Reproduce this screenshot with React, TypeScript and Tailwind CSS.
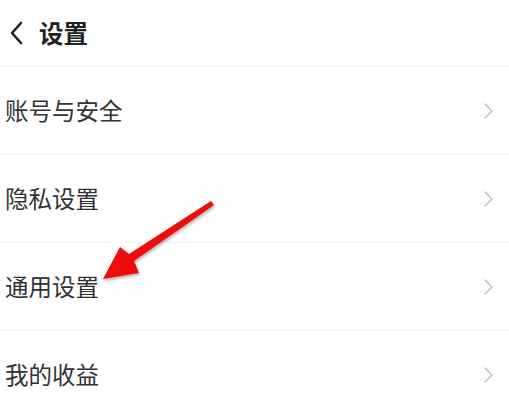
import React from 'react';

const items = ['账号与安全', '隐私设置', '通用设置', '我的收益'];

const Chevron = () => (
  <svg width="12" height="18" viewBox="0 0 12 18" fill="none">
    <path d="M3 2l7 7-7 7" stroke="#c4c4c4" strokeWidth="1.6" strokeLinecap="round" strokeLinejoin="round" />
  </svg>
);

export default function App() {
  return (
    <div
      className="relative w-[509px] h-[406px] overflow-hidden bg-white"
      style={{ fontFamily: '"Noto Sans CJK SC", "Noto Sans", sans-serif' }}
    >
      {/* header */}
      <div className="flex items-center h-[67px] pl-[8px] border-b border-[#f3f3f3]">
        <svg width="18" height="26" viewBox="0 0 18 26" fill="none">
          <path d="M13 3L4 13l9 10" stroke="#222" strokeWidth="2.6" strokeLinecap="round" strokeLinejoin="round" />
        </svg>
        <span className="ml-[13px] text-[24.5px] font-bold text-[#222] leading-none">设置</span>
      </div>

      {items.map((label, i) => (
        <div
          key={label}
          className={`flex items-center justify-between h-[88px] pl-[5px] pr-[15px] ${i < items.length - 1 ? 'border-b border-[#f3f3f3]' : ''}`}
        >
          <span className="text-[23.5px] text-[#333] leading-none">{label}</span>
          <Chevron />
        </div>
      ))}

      {/* red annotation arrow */}
      <svg className="absolute left-0 top-0 pointer-events-none" width="509" height="406" viewBox="0 0 509 406">
        <defs>
          <filter id="sh" x="-20%" y="-20%" width="140%" height="140%">
            <feDropShadow dx="1" dy="2" stdDeviation="1.5" floodColor="#000" floodOpacity="0.3" />
          </filter>
        </defs>
        <polygon
          points="211,201 214,205 134,261 139,273 103,279 120,247 129,254"
          fill="#ee1111"
          filter="url(#sh)"
        />
      </svg>
    </div>
  );
}
